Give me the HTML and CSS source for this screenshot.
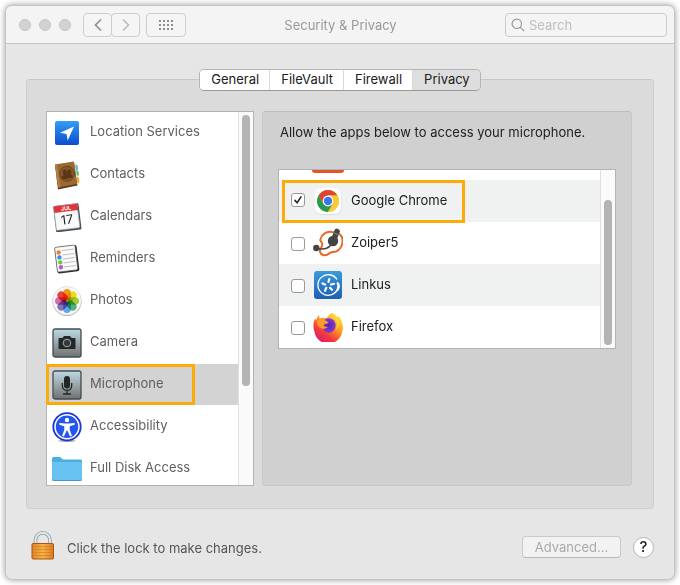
FILE: index.html
```html
<!DOCTYPE html>
<html lang="en">
<head>
<meta charset="utf-8">
<meta name="viewport" content="width=device-width, initial-scale=1">
<title>Security &amp; Privacy</title>
<link rel="stylesheet" href="styles.css">
</head>
<body>
<main class="window">
  <header class="titlebar">
    <div class="lights"><i></i><i></i><i></i></div>
    <nav class="history" aria-label="History">
      <button class="tool" type="button" aria-label="Back"><svg width="8" height="14" viewBox="0 0 8 14"><path d="M7 1.500 1.500 7 7 12.500" fill="none" stroke="#8f8f8f" stroke-width="1.700"/></svg></button>
      <button class="tool" type="button" aria-label="Forward"><svg width="8" height="14" viewBox="0 0 8 14"><path d="M1 1.500 6.500 7 1 12.500" fill="none" stroke="#bdbdbd" stroke-width="1.700"/></svg></button>
    </nav>
    <button class="tool grid-button" type="button" aria-label="Show all"><svg width="14" height="10" viewBox="0 0 14 10" fill="#8d8d8d"><path d="M0 0h2v2H0zM4 0h2v2H4zM8 0h2v2H8zM12 0h2v2h-2zM0 4h2v2H0zM4 4h2v2H4zM8 4h2v2H8zM12 4h2v2h-2zM0 8h2v2H0zM4 8h2v2H4zM8 8h2v2H8zM12 8h2v2h-2z"/></svg></button>
    <h1 class="title">Security &amp; Privacy</h1>
    <label class="search">
      <svg width="14" height="14" viewBox="0 0 14 14" fill="none" stroke="#9a9a9a" stroke-width="1.200"><circle cx="5.800" cy="5.800" r="4.700"/><path d="m9.200 9.200 4 4"/></svg>
      <input type="search" placeholder="Search" aria-label="Search">
    </label>
  </header>

  <div class="content">
    <div class="tabs" role="tablist">
      <button class="tab" type="button" role="tab">General</button>
      <button class="tab" type="button" role="tab">FileVault</button>
      <button class="tab" type="button" role="tab">Firewall</button>
      <button class="tab selected" type="button" role="tab" aria-selected="true">Privacy</button>
    </div>
    <section class="panel">
      <div class="list sidebar">
        <nav class="rows" aria-label="Privacy categories">
          <a class="row" href="#location"><svg class="icon" viewBox="0 0 30 30"><defs><linearGradient id="loc" x2="0" y2="1"><stop stop-color="#369cf6"/><stop offset="1" stop-color="#0a4dcb"/></linearGradient></defs><rect x="3" y="3" width="24" height="24" rx="2" fill="url(#loc)"/><path d="M22 8.500 8 14.800l6.500 1.200L15.700 22.500z" fill="#fff"/></svg><span>Location Services</span></a>
          <a class="row" href="#contacts"><svg class="icon" viewBox="0 0 30 30"><path d="m21 3 4 1 2 20-3 3z" fill="#eadfc7"/><path d="m23.500 5 2 .3.500 5-2 .4z" fill="#4fb5e8"/><path d="m24.500 11 2 .2.400 4-2 .4z" fill="#52bf68"/><path d="m25 17 2 .2.300 5-2 1z" fill="#f4a72c"/><path d="m3 5 19-3 3.300 23.500L6 29.500z" fill="#5e3815"/><path d="m3 4.500 18.700-3L25 24 6.300 27.500z" fill="#9a6a32"/><path d="m3 4.500 2-.4L8.300 27.200l-2 .3z" fill="#b58043"/><circle cx="15" cy="13.800" r="7.500" fill="#85572a" stroke="#6d441e"/><path d="M9.300 17.700c.3-2 2.300-1.600 2.300-3-2.800-6 3.700-7 3.200-1.500 0 2 .8 2 1.200 5-2.500 1.300-5 1.400-6.700-.5zM15.400 17.700l-.3-5c-.4-5 6-4 3.700 1 .1 1.500 2 1 2 2.700-1.400 1.800-3.300 2.200-5.400 1.300z" fill="#5b3614"/></svg><span>Contacts</span></a>
          <a class="row" href="#calendars"><svg class="icon" viewBox="0 0 30 30"><g transform="rotate(-7 15 15)"><rect x="2.500" y="2.500" width="25.500" height="26.500" rx="1.500" fill="#424e57"/><rect x="3" y="3" width="23.500" height="24" rx="1" fill="#fafafa" stroke="#aab0b3" stroke-width=".7"/><path d="M3 3h24v6.500H3z" fill="#df3538"/><text x="15" y="8.300" text-anchor="middle" font-family="Inter,sans-serif" font-weight="700" font-size="5.500" fill="#fff">JUL</text><text x="14.800" y="22" text-anchor="middle" font-family="Inter,sans-serif" font-size="12.500" fill="#222">17</text></g></svg><span>Calendars</span></a>
          <a class="row" href="#reminders"><svg class="icon" viewBox="0 0 30 30"><g transform="rotate(-7 15 15)"><rect x="4" y="2" width="22" height="26.500" rx="2" fill="#2d2d2d"/><rect x="4" y="2" width="20.500" height="25" rx="1.500" fill="#fafafa" stroke="#555" stroke-width=".7"/><path d="M11 6h12M11 10.500h12M11 14.500h12M11 18.500h12M11 22.500h12" stroke="#aaa" stroke-width=".7"/><circle cx="7.500" cy="7.500" r="2.200" fill="#f07e26"/><circle cx="7.700" cy="12.500" r="2.200" fill="#2c94e8"/><circle cx="7.900" cy="17.500" r="2.200" fill="#5fce38"/><circle cx="8" cy="22.500" r="2.200" fill="#b45ad2"/></g></svg><span>Reminders</span></a>
          <a class="row" href="#photos"><svg class="icon" viewBox="0 0 30 30"><circle cx="15" cy="15.500" r="14.500" fill="#aaa"/><circle cx="15" cy="14.800" r="14.300" fill="#f9f9f9" stroke="#d0d0d0" stroke-width=".6"/><g class="petals"><rect x="11.200" y="3" width="7.600" height="11.500" rx="3.800" fill="#f8981d"/><rect x="11.200" y="3" width="7.600" height="11.500" rx="3.800" fill="#f2e118" transform="rotate(45 15 15)"/><rect x="11.200" y="3" width="7.600" height="11.500" rx="3.800" fill="#a9d03c" transform="rotate(90 15 15)"/><rect x="11.200" y="3" width="7.600" height="11.500" rx="3.800" fill="#4eb882" transform="rotate(135 15 15)"/><rect x="11.200" y="3" width="7.600" height="11.500" rx="3.800" fill="#65abea" transform="rotate(180 15 15)"/><rect x="11.200" y="3" width="7.600" height="11.500" rx="3.800" fill="#8874be" transform="rotate(225 15 15)"/><rect x="11.200" y="3" width="7.600" height="11.500" rx="3.800" fill="#d66db0" transform="rotate(270 15 15)"/><rect x="11.200" y="3" width="7.600" height="11.500" rx="3.800" fill="#f0423c" transform="rotate(315 15 15)"/></g></svg><span>Photos</span></a>
          <a class="row" href="#camera"><svg class="icon" viewBox="0 0 30 30"><defs><linearGradient id="steel" x2="0" y2="1"><stop stop-color="#bcdae5"/><stop offset=".5" stop-color="#9aa6aa"/><stop offset="1" stop-color="#70706e"/></linearGradient></defs><rect x="1" y="1" width="28" height="28" rx="2" fill="url(#steel)" stroke="#424c50" stroke-width="1.300"/><path d="M7.500 10h3l1.500-2h6l1.500 2h3q1 0 1 1v9q0 1-1 1h-15q-1 0-1-1v-9q0-1 1-1z" fill="#242728"/><circle cx="15" cy="15" r="3.800" fill="#34393b" stroke="#a1a9ab" stroke-width="1"/></svg><span>Camera</span></a>
          <a class="row current" href="#microphone" aria-current="true"><svg class="icon" viewBox="0 0 30 30"><rect x="1" y="1" width="28" height="28" rx="2" fill="url(#steel)" stroke="#424c50" stroke-width="1.300"/><rect x="12" y="6" width="6" height="12.500" rx="3" fill="#242728"/><path d="M10.300 13v2.500c0 6.500 9.400 6.500 9.400 0V13M15 20.500V24M11 24h8" fill="none" stroke="#242728" stroke-width="1.300"/></svg><span>Microphone</span></a>
          <a class="row" href="#accessibility"><svg class="icon" viewBox="0 0 30 30"><ellipse cx="15" cy="28.800" rx="9" ry="1.200" fill="#bbb"/><circle cx="15" cy="14.800" r="14.600" fill="#1d36d8"/><circle cx="15" cy="14.800" r="12" fill="#2456ec" stroke="#fff" stroke-width="1.500"/><circle cx="15" cy="8" r="2.200" fill="#fff"/><path d="M7.300 11 13 11.600h4l5.700-.6v1.800l-5 1.500v3.500l2.200 6-1.800.7-2.800-6h-.6l-2.800 6-1.800-.7 2.200-6v-3.500l-5-1.500z" fill="#fff"/></svg><span>Accessibility</span></a>
          <a class="row" href="#disk"><svg class="icon" viewBox="0 0 30 30"><path d="M0 4.500Q0 3 1.500 3H8l3 2.500h17.500Q30 5.500 30 7v5H0z" fill="#49afdc"/><path d="M0 8h30v17q0 1.500-1.500 1.500h-27Q0 26.500 0 25z" fill="#68c3f2"/><path d="M0 25q0 1.500 1.500 1.500h27q1.500 0 1.500-1.500" fill="none" stroke="#3f9bca"/></svg><span>Full Disk Access</span></a>
        </nav>
        <div class="track"><div class="thumb side-thumb"></div></div>
      </div>

      <section class="detail">
        <h2 class="prompt">Allow the apps below to access your microphone.</h2>
        <div class="list apps">
          <div class="app-rows">
            <div class="app"><svg class="app-icon clipped" viewBox="0 0 32 30"><rect width="32" height="29" rx="3" fill="#e5532b"/></svg></div>
            <label class="app shaded marked"><input class="check" type="checkbox" checked><svg class="app-icon" viewBox="0 0 30 30"><rect x="2" y="2.500" width="26.500" height="26.500" rx="6" fill="#dcdddd"/><rect x="2" y="2" width="26" height="26" rx="6" fill="#fff"/><circle cx="15" cy="15" r="11" fill="#fcc934"/><path d="M5.500 9.500a11 11 0 0 1 19 0H15l-4.800 8.300z" fill="#dc4437"/><path d="M5.500 9.500A11 11 0 0 0 15 26l4.800-8.300-9.600-.2z" fill="#249b50"/><path d="M15 9.500h9.500A11 11 0 0 1 15 26l4.800-8.300z" fill="#fcc934"/><circle cx="15" cy="15" r="5.400" fill="#fff"/><circle cx="15" cy="15" r="4.200" fill="#3976e8"/></svg><span>Google Chrome</span></label>
            <label class="app"><input class="check" type="checkbox"><svg class="app-icon" viewBox="0 0 30 30"><path d="M19 4C13 3 8.500 7 7.500 11c-1 2.500 1.800 3 1.800 5.500 0 3-2.800 4-2.300 7 .8 4.800 6.500 4.500 9 2 2-2 4-1 7-2 6.500-2.500 8.500-12 4.500-16.500-2-2.300-5-2.500-8.500-3z" fill="#fff" stroke="#e86b28" stroke-width="2"/><path d="M3 20q13 4 17-7" fill="none" stroke="#444" stroke-width="1.500"/><circle cx="3.300" cy="20" r="3.200" fill="#444"/><circle cx="20" cy="13" r="5.200" fill="#444"/><path d="m21 11 3-7.500" stroke="#444" stroke-width="5.600" stroke-linecap="round"/><path d="m21 5 5 2" stroke="#999" stroke-width=".8"/></svg><span>Zoiper5</span></label>
            <label class="app shaded"><input class="check" type="checkbox"><svg class="app-icon" viewBox="0 0 30 30"><defs><linearGradient id="link" x2="0" y2="1"><stop stop-color="#389bdd"/><stop offset="1" stop-color="#205eb0"/></linearGradient></defs><rect x="1" y="1" width="28" height="28" rx="3" fill="url(#link)"/><path d="M24.500 19.500A10.300 10.300 0 1 1 24 9.500M19 24.500q7-3.500 6-10" fill="none" stroke="#fff" stroke-width="1.300"/><path d="M24 12.500q3.500 3 .3 8" fill="none" stroke="#fff" stroke-width="2.200"/><g stroke="#fff" stroke-width="2.200" stroke-linecap="round"><path d="m15.500 12 .8-3M18 14.500l3-.7M17 17.800l2 2M13.300 17.800 12 20.800M12 14.500l-2.500-1"/></g></svg><span>Linkus</span></label>
            <label class="app"><input class="check" type="checkbox"><svg class="app-icon" viewBox="0 0 30 30"><defs><linearGradient id="fox" x1=".9" x2=".2" y2="1"><stop stop-color="#fff24a"/><stop offset=".4" stop-color="#ff9a22"/><stop offset=".7" stop-color="#f33a3c"/><stop offset="1" stop-color="#dc1478"/></linearGradient><radialGradient id="globe"><stop stop-color="#4c2aa8"/><stop offset="1" stop-color="#8b35d9"/></radialGradient></defs><path d="M19 1c3 1 5 3.500 5.500 5l.7-2.500C30 9 31 16 29 20.500A14 14 0 0 1 1.500 20C-.5 14.500.5 9 2.500 6.500l.7 1.800Q4 5 6 3l.5 3.500Q11 5 13.500 6.200 16 2 19 1z" fill="url(#fox)"/><ellipse cx="15.800" cy="13.500" rx="6.800" ry="7.300" fill="url(#globe)"/><path d="M4 9q4-4 7.500-1l4 2.200q0 1.300-3.800 1.800-2.200 1.300.3 2.800l3 .2q-2.500 2.500-6 1.500Q4 15 4 9z" fill="#ff9c25"/><path d="M18 3q9 6 5 15 6-6 1.500-13z" fill="#ffd637"/></svg><span>Firefox</span></label>
          </div>
          <div class="track"><div class="thumb app-thumb"></div></div>
        </div>
      </section>
    </section>
  </div>

  <footer class="footer">
    <svg class="lock" width="24" height="30" viewBox="0 0 24 30"><defs><linearGradient id="brass" x2="1"><stop stop-color="#e18522"/><stop offset=".5" stop-color="#f9b246"/><stop offset="1" stop-color="#db7c1e"/></linearGradient></defs><path d="M4.500 14V9a7.200 7.200 0 0 1 14.400 0v5" fill="none" stroke="#8d98a0" stroke-width="3.500"/><path d="M4.500 14V9a7.200 7.200 0 0 1 14.400 0v5" fill="none" stroke="#e3eaee" stroke-width="2"/><rect x="1" y="12.500" width="21.500" height="15.500" rx="1" fill="url(#brass)" stroke="#aa5417"/><path d="M2 15.500h20M2 18.500h20M2 21.500h20M2 24.500h20" stroke="#c97822" stroke-width=".6"/></svg>
    <span class="lock-text">Click the lock to make changes.</span>
    <button class="advanced" type="button" disabled>Advanced...</button>
    <button class="help" type="button" aria-label="Help">?</button>
  </footer>
</main>
</body>
</html>
```
FILE: styles.css
```css
* { box-sizing: border-box; }

body {
  margin: 0;
  padding: 6px;
  background: #fff;
  color: #202020;
  font: 13px/16px Inter, "Liberation Sans", sans-serif;
}

button, input { font: inherit; color: inherit; }

.window {
  background: #e6e6e6;
  border-radius: 6px;
  box-shadow: 0 0 0 1px #c6c6c6, 0 0 6px 1px rgba(0, 0, 0, .4);
  overflow: hidden;
}

.titlebar {
  display: flex;
  align-items: center;
  height: 38px;
  padding: 0 7px 0 13px;
  background: #f4f4f4;
  border-bottom: 1px solid #c3c6c5;
}

.lights { display: flex; gap: 8px; }
.lights i {
  width: 12px;
  height: 12px;
  border: 1px solid #c6c6c6;
  border-radius: 50%;
  background: #d2d2d2;
}

.history { display: flex; margin-left: 12px; }
.tool {
  display: grid;
  place-items: center;
  width: 29px;
  height: 24px;
  padding: 0;
  border: 1px solid #cecece;
  border-radius: 4px;
  background: #f5f5f5;
}
.tool + .tool { margin-left: -1px; }
.grid-button { width: 40px; margin-left: 6px; }

.title {
  flex: 1;
  margin: 0;
  padding-right: 10px;
  color: #999;
  font-size: 13px;
  font-weight: 400;
  text-align: center;
}

.search {
  display: flex;
  align-items: center;
  gap: 4px;
  width: 162px;
  height: 24px;
  padding: 0 5px;
  border: 1px solid #cbcbcb;
  border-radius: 4px;
}
.search input {
  flex: 1;
  min-width: 0;
  padding: 0;
  border: 0;
  outline: 0;
  background: none;
}
.search input::placeholder { color: #bebebe; opacity: 1; }

.content {
  display: flex;
  flex-direction: column;
  padding: 25px 20px 0;
}

.tabs {
  z-index: 1;
  display: flex;
  align-self: center;
  height: 22px;
  margin-bottom: -12px;
  border: 1px solid #b5b5b5;
  border-bottom-color: #999;
  border-radius: 5px;
  overflow: hidden;
}
.tab {
  padding: 0 10px 2px 11px;
  border: 0;
  border-right: 1px solid #d8d8d8;
  background: #fff;
}
.tab.selected { border-right: 0; background: #dedede; }

.panel {
  display: flex;
  gap: 8px;
  padding: 31px 21px 22px 19px;
  border: 1px solid #cecece;
  border-top-color: #c6c6c6;
  border-radius: 4px;
  background: #dbdbdb;
}

.list {
  display: flex;
  border: 1px solid #b3b3b3;
  background: #fff;
}
.track {
  flex: none;
  width: 15px;
  padding: 3px;
  border-left: 1px solid #e0e0e0;
  background: #fafafa;
}
.thumb { width: 8px; border-radius: 4px; background: #b4b4b4; }

.sidebar { width: 208px; height: 375px; }
.rows {
  flex: 1;
  margin-left: -1px;
  padding-left: 1px;
  overflow: hidden;
}
.row {
  position: relative;
  display: flex;
  align-items: center;
  gap: 8px;
  height: 42px;
  padding-left: 5px;
  color: #606060;
  text-decoration: none;
}
.row span { padding-bottom: 4px; }
.app span { padding-bottom: 2px; }
.icon { width: 30px; height: 30px; }
.petals rect { mix-blend-mode: multiply; }
.current { height: 41px; margin-bottom: 1px; background: #d3d3d3; }
.current::after, .marked::after {
  content: "";
  position: absolute;
  border: 3px solid #fbab0a;
}
.current::after { inset: 0 43px 0 -1px; }
.side-thumb { height: 271px; }

.detail {
  flex: 1;
  padding: 12px 15px;
  border: 1px solid #c8c8c8;
  border-top-color: #bdbdbd;
  border-radius: 4px;
  background: #d0d0d0;
}
.prompt {
  margin: 0 2px 29px;
  font-size: 13px;
  font-weight: 400;
}
.apps { height: 180px; }
.app-rows {
  flex: 1;
  display: flex;
  flex-direction: column;
  justify-content: flex-end;
  overflow: hidden;
}
.app {
  position: relative;
  flex: none;
  display: flex;
  align-items: center;
  height: 42px;
  padding-left: 12px;
}
.shaded { background: #f0f2f1; }
.marked { z-index: 1; }
.marked::after { inset: 0 135px -1px 3px; }
.check {
  appearance: none;
  display: grid;
  place-items: center;
  width: 14px;
  height: 14px;
  margin: 2px 8px 0 0;
  border: 1px solid #999;
  border-radius: 3px;
  background: #fff;
}
.check:checked { margin: 0 8px 2px 0; }
.check:checked::after {
  content: "";
  width: 8px;
  height: 8px;
  background: #222;
  clip-path: polygon(0 55%, 14% 42%, 37% 68%, 84% 0, 100% 10%, 41% 100%);
}
.app-icon { width: 30px; height: 30px; margin-right: 8px; }
.clipped { width: 32px; margin: 0 0 0 21px; }
.app-thumb { height: 145px; margin-top: 27px; }

.footer {
  display: flex;
  align-items: center;
  height: 70px;
  padding: 6px 20px 0 25px;
}
.lock { margin-bottom: 2px; }
.lock-text { flex: 1; margin-left: 12px; padding-top: 2px; color: #555; }
.advanced {
  width: 99px;
  height: 22px;
  padding: 0;
  border: 1px solid #cacaca;
  border-bottom-color: #b9b9b9;
  border-radius: 4px;
  background: #f2f2f2;
  color: #aaa;
}
.help {
  width: 21px;
  height: 21px;
  margin-left: 12px;
  padding: 0;
  border: 1px solid #b5b5b5;
  border-radius: 50%;
  background: #fff;
  font-size: 15px;
  font-weight: 500;
}
```
